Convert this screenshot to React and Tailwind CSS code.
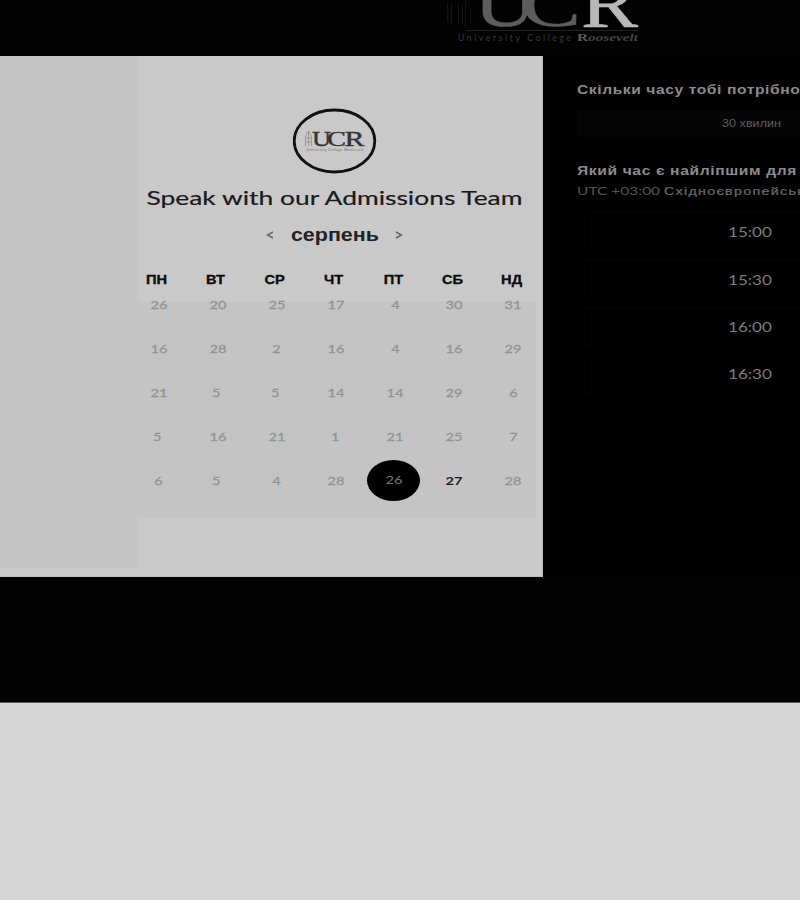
const weekdays = ['ПН', 'ВТ', 'СР', 'ЧТ', 'ПТ', 'СБ', 'НД'];

const weeks = [
  [26, 20, 25, 17, 4, 30, 31],
  [16, 28, 2, 16, 4, 16, 29],
  [21, 5, 5, 14, 14, 29, 6],
  [5, 16, 21, 1, 21, 25, 7],
  [6, 5, 4, 28, 26, 27, 28],
];

const slots = ['15:00', '15:30', '16:00', '16:30'];

const latin = "font-[Lato,'Open_Sans',sans-serif]";
const arial = "font-['Liberation_Sans',Arial,sans-serif]";

function Wide({ className = '', children }) {
  return <span className={`inline-block whitespace-nowrap ${className}`}>{children}</span>;
}

function HeaderLogo() {
  return (
    <svg className="ml-[444px] block shrink-0" width="206" height="56" viewBox="444 0 206 56">
      <g fill="none" stroke="#131313" strokeWidth="1">
        <path d="M447.500 3V22M451.500 3V24M458.500 3V24M462.500 3V24M465.500 0V28M470.500 8V24" />
        <path d="M466 30.500H638" stroke="#222" />
      </g>
      <g fontFamily="Liberation Serif, serif" fontSize="66">
        <text x="474" y="26" fill="#5c5c5c" stroke="#5c5c5c" strokeWidth="0.600" textLength="62" lengthAdjust="spacingAndGlyphs">U</text>
        <text x="521" y="26" fill="#5c5c5c" stroke="#5c5c5c" strokeWidth="0.600" textLength="60" lengthAdjust="spacingAndGlyphs">C</text>
        <text x="581" y="26.500" fill="#b8b8b8" stroke="#b8b8b8" strokeWidth="0.600" fontSize="70" textLength="57" lengthAdjust="spacingAndGlyphs">R</text>
      </g>
      <text x="458" y="41" fill="#3c3c3c" fontFamily="Lato, sans-serif" fontSize="8.500" textLength="113" lengthAdjust="spacing">University College</text>
      <text x="577" y="41" fill="#5c5c5c" fontFamily="Liberation Serif, serif" fontSize="10.500" fontWeight="700" textLength="61" lengthAdjust="spacingAndGlyphs">
        R<tspan fontStyle="italic" fill="#444">oosevelt</tspan>
      </text>
    </svg>
  );
}

function BadgeLogo() {
  return (
    <svg className="block" width="84" height="66" viewBox="0 0 84 66">
      <ellipse cx="41.500" cy="33" rx="40.300" ry="31" fill="none" stroke="#111" strokeWidth="2.800" />
      <path d="M12.500 38V28L15.500 23L18.500 28V38M15.500 24V38M12 30H19M12 34H19" fill="none" stroke="#9a9a9a" strokeWidth="1" />
      <g fontFamily="Liberation Serif, serif" fontSize="21" fill="#333" stroke="#333" strokeWidth="0.400">
        <text x="19" y="38" textLength="19" lengthAdjust="spacingAndGlyphs">U</text>
        <text x="34" y="38" textLength="19" lengthAdjust="spacingAndGlyphs">C</text>
        <text x="51.500" y="38" textLength="20" lengthAdjust="spacingAndGlyphs">R</text>
      </g>
      <text x="13.500" y="42.500" fontFamily="Lato, sans-serif" fontSize="4" fill="#777" textLength="57">University College Roosevelt</text>
    </svg>
  );
}

function Chevron({ right }) {
  return (
    <svg width="8" height="10" viewBox="0 0 8 10" fill="none" stroke="#666" strokeWidth="1.600">
      <path d={right ? 'M1 2L6.500 5L1 8' : 'M7 2L1.500 5L7 8'} />
    </svg>
  );
}

function Day({ value, selected, available }) {
  if (selected) {
    return (
      <div className="flex h-11 items-center justify-center pb-px">
        <div className="-ml-[3px] flex h-[41px] w-[53px] shrink-0 items-center justify-center rounded-[50%] bg-black pb-px text-[#777]">
          <Wide className="scale-x-[1.22]">{value}</Wide>
        </div>
      </div>
    );
  }
  const nudge = value === 5 ? 'pr-[3px]' : value === 1 ? 'pr-[2px]' : '';
  return (
    <div className={`flex h-11 items-center justify-center ${available ? 'font-bold text-[#1c1c1c]' : 'text-[#949494] [-webkit-text-stroke:0.3px_#949494]'}`}>
      <Wide className={`scale-x-[1.22] ${nudge}`}>{value}</Wide>
    </div>
  );
}

function Calendar() {
  return (
    <section className="flex h-[521px] w-[543px] shrink-0 border-b border-r border-[#bdbdbd] bg-[#c9c9c9]">
      <div className="h-[511px] w-[139px] shrink-0 bg-[#c5c5c5]">
        <div className="h-[132px]" />
        <div className="h-4 border-y-2 border-[#c7c7c7]" />
        <div className="h-[69px]" />
        <div className="h-3 border-y-2 border-[#c7c7c7]" />
      </div>
      <div className="flex w-[397px] shrink-0 flex-col">
        <div className="flex h-[246px] flex-col items-center pt-[52px]">
          <div className="-ml-[6px]"><BadgeLogo /></div>
          <h1 className={`mt-[11px] -ml-[6px] text-[20px] leading-[24px] text-[#1a1a1a] [-webkit-text-stroke:0.2px_#1a1a1a] ${latin}`}>
            <Wide className="scale-x-[1.320]">Speak with our Admissions Team</Wide>
          </h1>
          <div className="mt-[14px] -ml-[6px] flex h-6 w-[138px] items-center justify-between">
            <Chevron />
            <Wide className={`scale-x-[1.160] text-[18.500px] font-bold text-[#222] ${arial}`}>серпень</Wide>
            <Chevron right />
          </div>
          <div className={`-ml-[7px] mt-[25px] grid w-[414px] shrink-0 grid-cols-7 text-center text-[12px] leading-4 font-bold text-[#0c0c0c] [-webkit-text-stroke:0.3px_#0c0c0c] ${arial}`}>
            {weekdays.map((d) => (
              <Wide key={d} className="scale-x-[1.22]">{d}</Wide>
            ))}
          </div>
        </div>
        <div className="h-[216px] bg-[#c4c4c4]">
          <div className={`-mt-[19px] -ml-[10px] grid w-[414px] grid-cols-7 text-[12px] ${latin}`}>
            {weeks.flatMap((week, r) =>
              week.map((value, c) => (
                <Day key={`${r}-${c}`} value={value} selected={r === 4 && c === 4} available={r === 4 && c === 5} />
              ))
            )}
          </div>
        </div>
      </div>
    </section>
  );
}

function Booking() {
  return (
    <section className="flex min-w-0 flex-1 flex-col overflow-hidden bg-black pl-[34px]">
      <h2 className={`mt-[25px] h-[18px] text-[13px] leading-[18px] font-bold text-[#8c8c8c] ${arial}`}>
        <Wide className="origin-left scale-x-[1.200] tracking-[0.490px]">Скільки часу тобі потрібно</Wide>
      </h2>
      <div className={`mt-[11px] flex h-[27px] w-[350px] items-center justify-center bg-[#050505] text-[10.500px] text-[#5c5c5c] ${arial}`}>
        <Wide className="scale-x-[1.200]">30 хвилин</Wide>
      </div>
      <h2 className={`mt-[25px] h-[18px] text-[13px] leading-[18px] font-bold text-[#8c8c8c] ${arial}`}>
        <Wide className="origin-left scale-x-[1.200] tracking-[0.520px]">Який час є найліпшим для&nbsp;&nbsp;тебе?</Wide>
      </h2>
      <p className="mt-[3px] flex h-4 text-[12px] leading-4">
        <Wide className={`w-[87px] shrink-0 origin-left scale-x-[1.290] text-[#555] ${latin}`}>UTC +03:00</Wide>
        <Wide className={`origin-left scale-x-[1.240] text-[11.500px] tracking-[1.050px] text-[#6c6c6c] [-webkit-text-stroke:0.2px_#6c6c6c] ${arial}`}>Східноєвропейський час</Wide>
      </p>
      <div className={`mt-[13px] ml-[7px] flex w-[331px] flex-col gap-[8px] text-[14px] text-[#7c7c7c] ${latin}`}>
        {slots.map((s) => (
          <div key={s} className="flex h-[39.400px] items-center justify-center border border-[#050505]">
            <Wide className="scale-x-[1.22]">{s}</Wide>
          </div>
        ))}
      </div>
    </section>
  );
}

export default function App() {
  return (
    <main className="flex h-[900px] w-[800px] flex-col overflow-hidden bg-[#020202]">
      <header className="h-14 shrink-0 overflow-hidden">
        <HeaderLogo />
      </header>
      <div className="flex h-[521px] shrink-0">
        <Calendar />
        <Booking />
      </div>
      <div className="h-[125px] shrink-0 bg-[#020202]" />
      <footer className="flex-1 border-t border-[#555] bg-[#d7d7d7]" />
    </main>
  );
}
